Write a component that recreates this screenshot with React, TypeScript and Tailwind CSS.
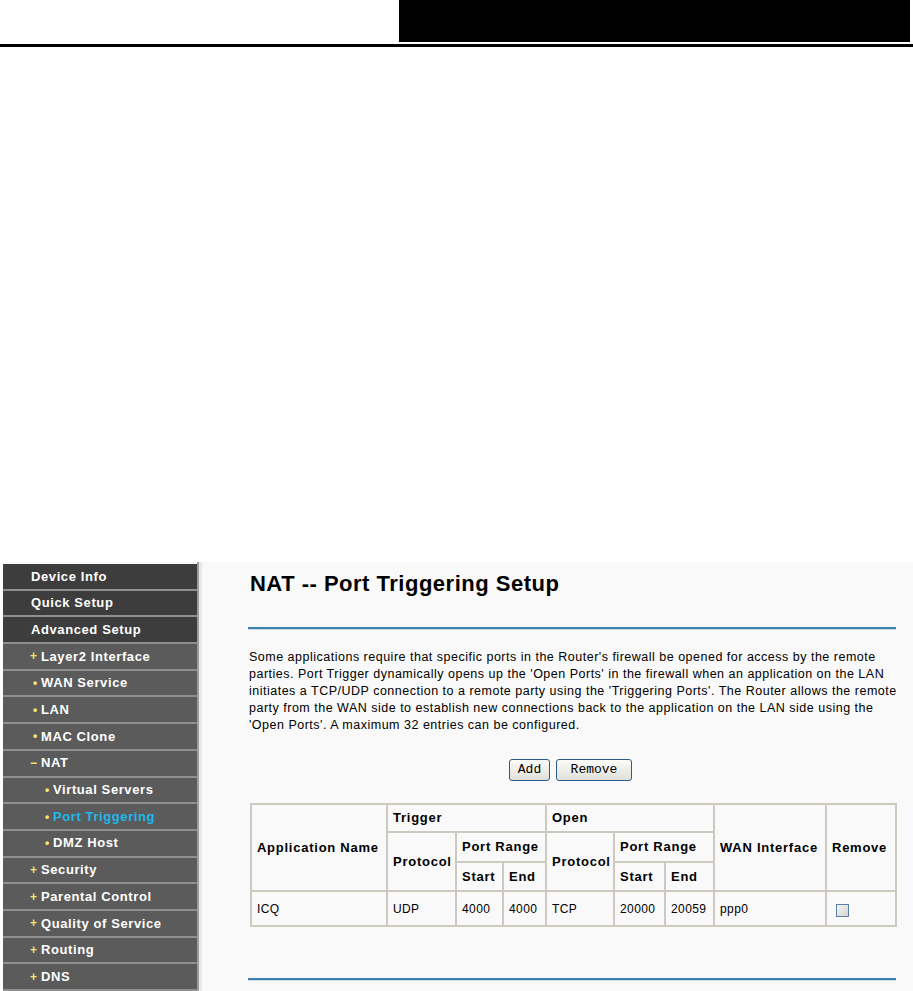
import React from "react";

const Y = "text-[#f4e46a]";

function TopItem({ label }: { label: string }) {
  return (
    <div className="h-[26.7px] border-b-2 border-[#8f8f8f] bg-[#3d3d3d] flex items-center pl-[28px] text-white font-bold text-[13px] tracking-[0.6px]">
      {label}
    </div>
  );
}

function SubItem({ mark, label, level, active }: { mark: string; label: string; level: 2 | 3; active?: boolean }) {
  return (
    <div
      className={
        "h-[26.7px] border-b-2 border-[#8f8f8f] bg-[#5b5b5b] flex items-center font-bold text-[13px] tracking-[0.6px] " +
        (level === 2 ? "pl-[27px]" : "pl-[39px]")
      }
    >
      <span className={Y + " inline-block w-[11px] text-[12px] leading-none tracking-normal " + (mark === "•" ? "pl-[3px]" : "")}>{mark}</span>
      <span className={active ? "text-[#1cb8ee]" : "text-white"}>{label}</span>
    </div>
  );
}

const th = "border-2 border-[#cdc9c1] text-left font-bold text-[13px] tracking-[0.75px] px-[5px] align-middle";
const td = "border-2 border-[#cdc9c1] text-left text-[12px] tracking-[0.4px] px-[5px] align-middle";

export default function App() {
  return (
    <div className="w-[913px] h-[991px] bg-white overflow-hidden" style={{ fontFamily: '"Liberation Sans", Arial, sans-serif' }}>
      <div className="flex h-[42px]">
        <div className="w-[399px]" />
        <div className="w-[511px] bg-black" />
      </div>
      <div className="h-[3px] mt-[2px] bg-black" />
      <div className="h-[515px]" />
      <div className="flex bg-[#f9f9f9] h-[444px]">
        <div className="w-[3px] bg-white" />
        <div className="w-[195px] pt-[2px] bg-[#f9f9f9]">
          <TopItem label="Device Info" />
          <TopItem label="Quick Setup" />
          <TopItem label="Advanced Setup" />
          <SubItem level={2} mark="+" label="Layer2 Interface" />
          <SubItem level={2} mark="•" label="WAN Service" />
          <SubItem level={2} mark="•" label="LAN" />
          <SubItem level={2} mark="•" label="MAC Clone" />
          <SubItem level={2} mark="−" label="NAT" />
          <SubItem level={3} mark="•" label="Virtual Servers" />
          <SubItem level={3} mark="•" label="Port Triggering" active />
          <SubItem level={3} mark="•" label="DMZ Host" />
          <SubItem level={2} mark="+" label="Security" />
          <SubItem level={2} mark="+" label="Parental Control" />
          <SubItem level={2} mark="+" label="Quality of Service" />
          <SubItem level={2} mark="+" label="Routing" />
          <SubItem level={2} mark="+" label="DNS" />
          <div className="h-[10px] bg-[#5b5b5b]" />
        </div>
        <div className="w-[2px] bg-[#9c9c9c]" />
        <div className="w-[3px] bg-[#ece8e0]" />
        <div className="flex-1 pl-[46px] pr-[16px] pt-[9px] text-black">
          <div className="pl-[2px] text-[22px] leading-[26px] font-bold tracking-[0.5px]">NAT -- Port Triggering Setup</div>
          <div className="mt-[30px] w-[648px] h-[2px] bg-[#3b82ad]" />
          <div className="w-[648px] h-[1px] bg-[#c9dde9]" />
          <div className="mt-[19px] pl-[1px] text-[12.5px] leading-[17px] tracking-[0.5px] whitespace-nowrap">
            <div>Some applications require that specific ports in the Router's firewall be opened for access by the remote</div>
            <div>parties. Port Trigger dynamically opens up the 'Open Ports' in the firewall when an application on the LAN</div>
            <div>initiates a TCP/UDP connection to a remote party using the 'Triggering Ports'. The Router allows the remote</div>
            <div>party from the WAN side to establish new connections back to the application on the LAN side using the</div>
            <div>'Open Ports'. A maximum 32 entries can be configured.</div>
          </div>
          <div className="mt-[25px] flex gap-[6px] pl-[261px]">
            <button className="h-[22px] w-[41px] rounded-[3px] border border-[#2a5d8f] bg-gradient-to-b from-[#fbfbf8] to-[#e2e0d9] text-[13px]" style={{ fontFamily: '"Liberation Mono", "Courier New", monospace' }}>
              Add
            </button>
            <button className="h-[22px] w-[76px] rounded-[3px] border border-[#2a5d8f] bg-gradient-to-b from-[#fbfbf8] to-[#e2e0d9] text-[13px]" style={{ fontFamily: '"Liberation Mono", "Courier New", monospace' }}>
              Remove
            </button>
          </div>
          <table className="mt-[22px] ml-[2px] border-collapse table-fixed w-[645px]">
            <colgroup>
              <col className="w-[136px]" />
              <col className="w-[69px]" />
              <col className="w-[47px]" />
              <col className="w-[43px]" />
              <col className="w-[68px]" />
              <col className="w-[51px]" />
              <col className="w-[49px]" />
              <col className="w-[112px]" />
              <col className="w-[70px]" />
            </colgroup>
            <tbody>
              <tr className="h-[28px]">
                <th rowSpan={3} className={th}>Application Name</th>
                <th colSpan={3} className={th}>Trigger</th>
                <th colSpan={3} className={th}>Open</th>
                <th rowSpan={3} className={th}>WAN Interface</th>
                <th rowSpan={3} className={th}>Remove</th>
              </tr>
              <tr className="h-[30px]">
                <th rowSpan={2} className={th}>Protocol</th>
                <th colSpan={2} className={th}>Port Range</th>
                <th rowSpan={2} className={th}>Protocol</th>
                <th colSpan={2} className={th}>Port Range</th>
              </tr>
              <tr className="h-[29px]">
                <th className={th}>Start</th>
                <th className={th}>End</th>
                <th className={th}>Start</th>
                <th className={th}>End</th>
              </tr>
              <tr className="h-[35px]">
                <td className={td}>ICQ</td>
                <td className={td}>UDP</td>
                <td className={td}>4000</td>
                <td className={td}>4000</td>
                <td className={td}>TCP</td>
                <td className={td}>20000</td>
                <td className={td}>20059</td>
                <td className={td}>ppp0</td>
                <td className={td}>
                  <span className="ml-[4px] mt-[3px] block w-[13px] h-[13px] border border-[#5b7fa6] bg-gradient-to-br from-[#f2f2f0] to-[#d6d6d0]" />
                </td>
              </tr>
            </tbody>
          </table>
          <div className="mt-[51px] w-[648px] h-[2px] bg-[#3b82ad]" />
          <div className="w-[648px] h-[1px] bg-[#c9dde9]" />
        </div>
      </div>
    </div>
  );
}
